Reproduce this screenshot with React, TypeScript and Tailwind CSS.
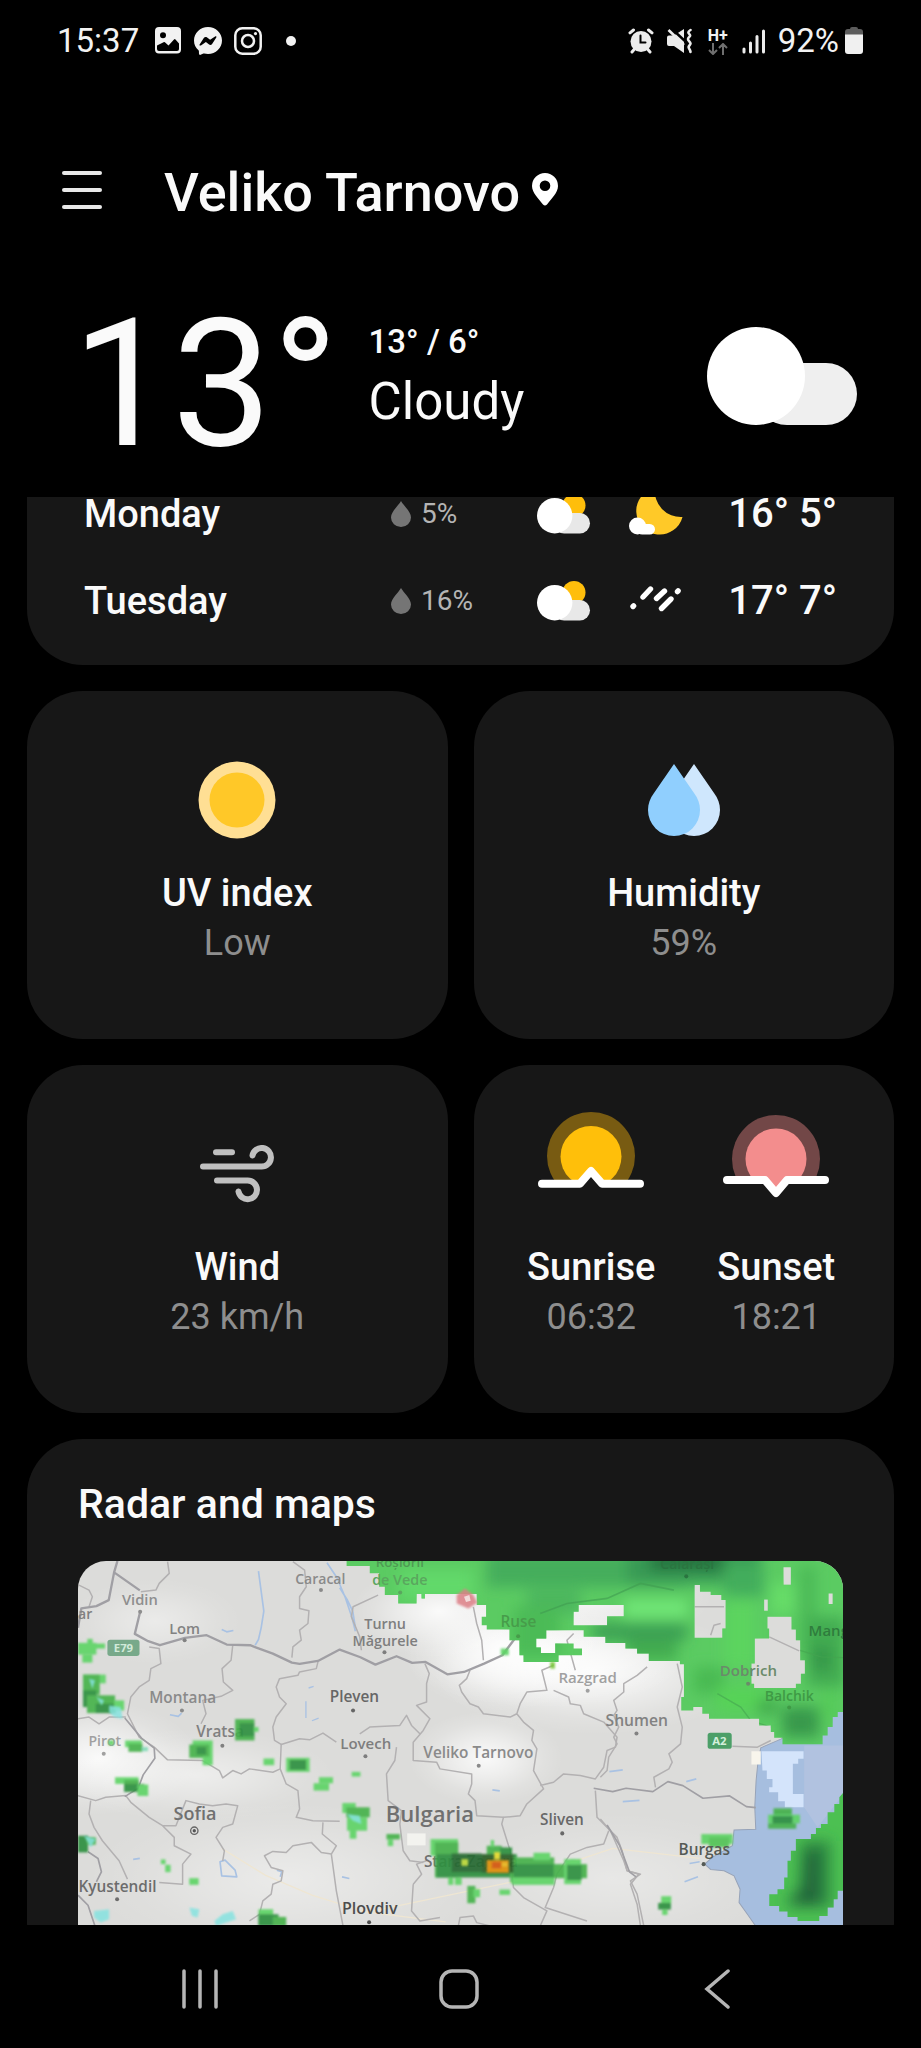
import React from "react";

type IconProps = { className?: string };

/* ---------- status bar icons ---------- */

const ImageIcon = () => (
  <svg className="h-7 w-7" viewBox="0 0 28 28" fill="#f2f2f2">
    <path
      fillRule="evenodd"
      d="M5 0H23a4 4 0 0 1 4 4V22.500a4 4 0 0 1-4 4H5a4 4 0 0 1-4-4V4a4 4 0 0 1 4-4ZM9 5.200a3 3 0 1 0 0 6 3 3 0 0 0 0-6ZM3 18.500V22a2 2 0 0 0 2 2H23a2 2 0 0 0 2-2V16.500L21.500 12.500a1 1 0 0 0-1.500 0L14.500 18.500l-3.600-3.200a1 1 0 0 0-1.400 0Z"
    />
  </svg>
);

const MessengerIcon = () => (
  <svg className="h-7 w-7" viewBox="0 0 28 28">
    <path
      fill="#f2f2f2"
      d="M14 0C6.200 0 0 5.900 0 13.500c0 4 1.700 7.400 4.500 9.800.3.200.4.600.4 1l.1 2.500c0 .8.800 1.300 1.600 1l2.800-1.200c.3-.1.500-.1.800 0 1.200.3 2.500.5 3.800.5 7.800 0 14-5.900 14-13.500S21.800 0 14 0Z"
    />
    <path fill="#000" d="m5.600 17.400 4.200-6.500c.7-1 2-1.300 3-.6l3.300 2.500 5-3.300c.9-.7 1.700.2 1.200 1l-4.200 6.400c-.6 1-2 1.300-3 .6l-3.200-2.500-5 3.400c-.9.600-1.900-.1-1.300-1Z" />
  </svg>
);

const InstagramIcon = () => (
  <svg className="h-7 w-7" viewBox="0 0 28 28" fill="none" stroke="#f2f2f2" strokeWidth="2.500">
    <rect x="1.300" y="1.300" width="25.400" height="25.400" rx="7" />
    <circle cx="14" cy="14" r="6" />
    <circle cx="21.500" cy="6.600" r="1.600" fill="#f2f2f2" stroke="none" />
  </svg>
);

const AlarmIcon = () => (
  <svg className="h-[26px] w-[26px]" viewBox="0 0 26 26" fill="none" stroke="#ececec" strokeLinecap="round">
    <circle cx="13" cy="13.500" r="10.500" fill="#ececec" stroke="none" />
    <path strokeWidth="3" d="M2 4.800 5.500 2M24 4.800 20.500 2M4 24l2.500-3M22 24l-2.500-3" />
    <path stroke="#000" strokeWidth="2" d="M12.500 7.500v7h5" />
  </svg>
);

const MuteIcon = () => (
  <svg className="h-[26px] w-[26px]" viewBox="0 0 26 26">
    <path fill="#ececec" d="M1 9.500a2 2 0 0 1 2-2H8L18 1V25L8 18H3a2 2 0 0 1-2-2Z" />
    <path stroke="#000" strokeWidth="2.500" d="M5 0 20 14" />
    <path stroke="#ececec" strokeWidth="2.600" d="M2.500 2 18 17" />
    <path
      fill="none"
      stroke="#ececec"
      strokeWidth="2.600"
      strokeLinecap="round"
      d="M24.500 2c-5 3 .5 4-.5 6s-3.500 2-1 5 1.500 3 0 5 1 2 1.500 6"
    />
  </svg>
);

const DataArrowsIcon = () => (
  <svg className="h-3 w-5" viewBox="0 0 20 12" fill="none" stroke="#6f6f6f" strokeWidth="2">
    <path d="M5 0v11M1 7l4 4 4-4M15 12V1M11 5l4-4 4 4" />
  </svg>
);

const SignalIcon = () => (
  <svg className="h-[26px] w-6" viewBox="0 0 24 26" stroke="#ececec" strokeWidth="3" strokeLinecap="round">
    <path d="M2 21v3M8.500 15v9M15 8.500V24M21.500 3v21" />
  </svg>
);

const BatteryIcon = () => (
  <svg className="h-7 w-[18px]" viewBox="0 0 18 28">
    <path fill="#5c5c5c" d="M5 2a2 2 0 0 1 2-2h4a2 2 0 0 1 2 2h2a3 3 0 0 1 3 3V12H0V5a3 3 0 0 1 3-3Z" />
    <path fill="#f0f0f0" d="M0 7.500H18V24a3 3 0 0 1-3 3H3a3 3 0 0 1-3-3Z" />
  </svg>
);

/* ---------- weather icons ---------- */

const PinIcon = () => (
  <svg className="h-[34px] w-[26px]" viewBox="0 0 26 34">
    <path
      fill="#fff"
      fillRule="evenodd"
      d="M13 0a13 13 0 0 0-13 13c0 7 7 13 11 18.500q2 2 4 0C19 26 26 20 26 13A13 13 0 0 0 13 0Zm0 7.500a5.300 5.300 0 1 1 0 10.600 5.300 5.300 0 0 1 0-10.600Z"
    />
  </svg>
);

const CloudIcon = () => (
  <svg className="h-[98px] w-[150px]" viewBox="0 0 150 98">
    <rect x="49" y="36" width="101" height="62" rx="31" fill="#efefef" />
    <circle cx="49" cy="49" r="49" fill="#fff" />
  </svg>
);

const PartlyCloudyIcon = () => (
  <svg className="h-14 w-[54px]" viewBox="0 0 54 56">
    <circle cx="37" cy="19.500" r="11.500" fill="#ffbe0b" />
    <rect x="17" y="27" width="36" height="20.500" rx="10.200" fill="#e8e8e8" />
    <circle cx="17.700" cy="29.700" r="17.700" fill="#fff" />
  </svg>
);

const MoonCloudIcon = () => (
  <svg className="h-14 w-14" viewBox="0 0 56 56">
    <path fill="#ffc928" d="M27 2A23.500 23.500 0 1 0 54.500 31A26 26 0 0 1 27 2Z" />
    <rect x="9" y="38" width="18" height="10.500" rx="5.200" fill="#fff" />
    <circle cx="9.500" cy="40" r="8.500" fill="#fff" />
  </svg>
);

const RainIcon = () => (
  <svg className="h-14 w-14" viewBox="0 0 56 56" stroke="#fff" strokeWidth="5.400" strokeLinecap="round">
    <path d="m5 33.500.6-.6M15 24l7.500-8M28.500 25.500l8-7.500M33.500 35.500l9.500-9.500M49.500 18.600l.6-.7" />
  </svg>
);

const RainDrop = () => (
  <svg className="h-[26px] w-5" viewBox="0 0 20 26">
    <path fill="#757575" d="M10 0c2 4 10 10.500 10 16.500a10 9.500 0 0 1-20 0C0 10.500 8 4 10 0Z" />
  </svg>
);

const UvIcon = ({ className }: IconProps) => (
  <svg className={className} viewBox="0 0 78 78">
    <circle cx="39" cy="39" r="38.500" fill="#ffdf94" />
    <circle cx="39" cy="39" r="27.500" fill="#ffc828" />
  </svg>
);

const HumidityIcon = ({ className }: IconProps) => (
  <svg className={className} viewBox="0 0 72 72">
    <path fill="#cfe7fd" d="M46 0 66 29C70 34 72 40 72 46A26 26 0 0 1 20 46C20 40 22 34 26 29Z" />
    <path fill="#90cffe" d="M26 0 46 29C50 34 52 40 52 46A26 26 0 0 1 0 46C0 40 2 34 6 29Z" />
  </svg>
);

const WindIcon = ({ className }: IconProps) => (
  <svg className={className} viewBox="0 0 74 58" fill="none" stroke="#c0c0c0" strokeWidth="6" strokeLinecap="round">
    <path d="M16 7.300H32" />
    <path d="M3 21.600H61.500A9.300 9.300 0 1 0 52.500 10.500" />
    <path d="M17 35.600H47.500A9.300 9.300 0 1 1 38.500 46.500" />
  </svg>
);

const SunriseIcon = ({ className }: IconProps) => (
  <svg className={className} viewBox="0 0 108 124">
    <clipPath id="sunrise-sky">
      <path d="M0 0H108V71H66L54 59 42 71H0Z" />
    </clipPath>
    <g clipPath="url(#sunrise-sky)">
      <circle cx="54" cy="44" r="44" fill="#785b12" />
      <circle cx="54" cy="44.500" r="30.500" fill="#ffbf0a" />
    </g>
    <path d="M5 71.700H43L54 59 65 71.700H103" fill="none" stroke="#fff" strokeWidth="8" strokeLinecap="round" strokeLinejoin="round" />
  </svg>
);

const SunsetIcon = ({ className }: IconProps) => (
  <svg className={className} viewBox="0 0 108 124">
    <clipPath id="sunset-sky">
      <path d="M0 0H108V68H66L54 81 42 68H0Z" />
    </clipPath>
    <g clipPath="url(#sunset-sky)">
      <circle cx="54" cy="47" r="44" fill="#724747" />
      <circle cx="54" cy="47" r="30.500" fill="#f38d8d" />
    </g>
    <path d="M5 68H43L54 81 65 68H103" fill="none" stroke="#fff" strokeWidth="8" strokeLinecap="round" strokeLinejoin="round" />
  </svg>
);

/* ---------- radar map ---------- */

type Echo = [number, number, number, number, string];

const LIGHT = "#5fd466";
const MID = "#46b24c";
const DEEP = "#2f9040";

const westEchoes: Echo[] = [
  [57, 308, 55, 35, LIGHT], [85, 296, 16, 14, LIGHT], [70, 343, 30, 24, LIGHT], [110, 310, 28, 15, LIGHT],
  [72, 403, 68, 26, LIGHT], [72, 403, 50, 60, MID], [72, 450, 40, 50, DEEP], [84, 465, 84, 53, MID], [110, 490, 60, 28, DEEP], [165, 480, 30, 30, LIGHT],
  [148, 600, 16, 14, LIGHT], [198, 600, 50, 20, LIGHT], [208, 610, 42, 24, MID], [248, 620, 18, 12, "#7fd9b5"],
  [168, 710, 70, 20, LIGHT], [195, 718, 44, 34, MID], [195, 730, 60, 24, DEEP], [235, 732, 32, 34, LIGHT],
  [400, 600, 60, 50, LIGHT], [390, 612, 60, 40, MID], [412, 620, 28, 22, DEEP], [430, 648, 30, 26, LIGHT],
  [527, 536, 58, 64, MID], [540, 548, 44, 40, DEEP], [583, 560, 14, 14, LIGHT],
  [612, 654, 32, 20, LIGHT], [680, 652, 70, 42, LIGHT], [690, 658, 50, 30, DEEP], [778, 710, 42, 18, LIGHT], [762, 728, 46, 22, LIGHT],
  [876, 694, 26, 14, LIGHT],
  [848, 787, 40, 30, LIGHT], [860, 800, 70, 30, MID], [862, 830, 60, 40, LIGHT], [870, 860, 20, 34, LIGHT],
  [57, 885, 30, 50, DEEP], [84, 890, 26, 22, MID],
  [305, 956, 14, 14, LIGHT], [318, 972, 16, 22, LIGHT], [390, 1012, 28, 20, LIGHT],
  [597, 1105, 44, 50, LIGHT], [597, 1120, 60, 35, DEEP], [640, 1128, 40, 27, MID],
];

const centralEchoes: Echo[] = [
  [482, 325, 24, 20, LIGHT], [630, 365, 14, 20, "#7cc83e"],
  [140, 880, 40, 16, MID], [144, 896, 16, 20, LIGHT],
  [272, 895, 82, 50, LIGHT], [285, 905, 70, 105, MID], [290, 940, 240, 70, DEEP],
  [440, 915, 45, 30, MID], [452, 898, 10, 20, LIGHT], [480, 920, 36, 20, DEEP], [345, 1010, 20, 22, LIGHT], [325, 1010, 15, 22, LIGHT],
  [510, 950, 132, 75, MID], [520, 970, 124, 40, DEEP], [580, 936, 50, 22, LIGHT], [515, 1010, 128, 22, LIGHT],
  [640, 970, 100, 42, MID], [672, 955, 50, 75, LIGHT], [680, 972, 44, 46, DEEP], [690, 955, 18, 16, LIGHT],
  [382, 1035, 24, 52, MID], [400, 1045, 20, 24, LIGHT], [478, 1046, 32, 16, LIGHT],
  [335, 938, 90, 56, "#256a30"], [425, 940, 95, 56, "#2a5f28"],
];

const stormCells: Echo[] = [
  [364, 955, 20, 20, "#c9e045"],
  [440, 958, 66, 38, "#ee9a18"], [455, 963, 28, 20, "#e2601f"], [462, 934, 18, 22, "#f0e23a"], [486, 965, 16, 12, "#f7c531"],
];

const eastEchoes: Echo[] = [
  [302, 880, 94, 30, LIGHT], [325, 890, 60, 30, "#52c456"],
  [182, 1066, 30, 22, LIGHT], [173, 1086, 38, 20, DEEP], [185, 1106, 16, 16, LIGHT],
  [518, 803, 55, 20, MID], [502, 822, 95, 26, LIGHT], [515, 826, 60, 26, DEEP], [502, 848, 84, 16, MID],
];

const Echoes = ({ items }: { items: Echo[] }) => (
  <g opacity=".92" filter="url(#echo-edge)">
    {items.map(([x, y, w, h, fill], i) => (
      <rect key={i} x={x} y={y} width={w} height={h} fill={fill} />
    ))}
  </g>
);

type Place = { name: string; x: number; y: number; size: number; color: string; dot?: [number, number] };

const places: Place[] = [
  { name: "Vidin", x: 185, y: 131, size: 44, color: "#8e8e8e", dot: [186, 152] },
  { name: "Caracal", x: 725, y: 69, size: 42, color: "#8a8a8a", dot: [727, 87] },
  { name: "Lom", x: 319, y: 219, size: 44, color: "#828282", dot: [319, 237] },
  { name: "Montana", x: 313, y: 424, size: 46, color: "#8a8a8a", dot: [311, 447] },
  { name: "Vratsa", x: 425, y: 527, size: 46, color: "#808080", dot: [432, 553] },
  { name: "Pirot", x: 80, y: 555, size: 42, color: "#a0a0a0", dot: [77, 577] },
  { name: "Sofia", x: 350, y: 775, size: 54, color: "#707070" },
  { name: "Kyustendil", x: 118, y: 990, size: 46, color: "#6c6c6c", dot: [117, 1012] },
  { name: "Turnu", x: 919, y: 203, size: 43, color: "#7e7e7e" },
  { name: "Măgurele", x: 919, y: 253, size: 43, color: "#7e7e7e", dot: [917, 273] },
  { name: "Pleven", x: 827, y: 423, size: 46, color: "#666666", dot: [823, 447] },
  { name: "Lovech", x: 861, y: 562, size: 45, color: "#7e7e7e", dot: [860, 584] },
  { name: "Veliko Tarnovo", x: 1198, y: 589, size: 46, color: "#8a8a8a", dot: [1199, 613] },
  { name: "Bulgaria", x: 1053, y: 780, size: 66, color: "#707070" },
  { name: "Sliven", x: 1448, y: 790, size: 46, color: "#686868", dot: [1449, 815] },
  { name: "Plovdiv", x: 873, y: 1056, size: 48, color: "#4c4c4c", dot: [871, 1081] },
  { name: "Razgrad", x: 1525, y: 366, size: 45, color: "#a0a0a0", dot: [1525, 388] },
  { name: "Shumen", x: 1672, y: 495, size: 47, color: "#828282", dot: [1671, 516] },
];

const coveredPlaces: Place[] = [
  { name: "Roșiorii", x: 963, y: 18, size: 40, color: "#4f9a53" },
  { name: "de Vede", x: 963, y: 72, size: 43, color: "#5aa65e", dot: [964, 94] },
  { name: "Călărași", x: 1823, y: 24, size: 42, color: "#2a7540", dot: [1820, 46] },
  { name: "Ruse", x: 1318, y: 197, size: 46, color: "#479c4a", dot: [1317, 225] },
  { name: "Dobrich", x: 2006, y: 344, size: 45, color: "#6b8a6a", dot: [2005, 367] },
  { name: "Balchik", x: 2128, y: 419, size: 42, color: "#3f9a45", dot: [2128, 438] },
  { name: "Burgas", x: 1874, y: 881, size: 46, color: "#555a55", dot: [1872, 907] },
];

const Labels = ({ items }: { items: Place[] }) => (
  <g fontFamily='"Open Sans", "Noto Sans", sans-serif' fontWeight="600" textAnchor="middle">
    {items.map((p) => (
      <g key={p.name} fill={p.color}>
        <text x={p.x} y={p.y} fontSize={p.size}>
          {p.name}
        </text>
        {p.dot && <circle cx={p.dot[0]} cy={p.dot[1]} r="6" />}
      </g>
    ))}
  </g>
);

const RadarMap = () => (
  <svg
    className="block w-full rounded-t-[28px]"
    viewBox="0 0 2289 1092"
    preserveAspectRatio="xMidYMin slice"
    role="img"
    aria-label="Rain radar over Bulgaria"
  >
    <defs>
      <radialGradient id="haze">
        <stop offset="0" stopColor="#fff" stopOpacity=".85" />
        <stop offset=".4" stopColor="#fff" stopOpacity=".5" />
        <stop offset=".75" stopColor="#fff" stopOpacity=".15" />
        <stop offset="1" stopColor="#fff" stopOpacity="0" />
      </radialGradient>
      <filter id="soft" x="-30%" y="-30%" width="160%" height="160%">
        <feGaussianBlur stdDeviation="20" />
      </filter>
      <filter id="echo-edge">
        <feGaussianBlur stdDeviation="2.500" />
      </filter>
      <clipPath id="front">
        <path
          clipRule="evenodd"
          d="M20 63V78H90V100H118V140H135V165H175V190H230V162H245V175H255V162H410V195H438V230H425V255H440V268H508V300H538V345H550V365H655V345H725V325H700V310H645V338H602V322H588V295H618V270H730V290H795V308H855V325H890V340H925V362H1018V372H1030V470H1022V510H1058V500H1085V520H1105V535H1255V555H1290V575H1300V592H1325V612H1445V585H1460V560H1475V530H1490V515H1512V63ZM715 195H850V228H800V255H700V215H715ZM1062 135H1078V155H1110V165H1142V180H1155V265H1145V293H1062ZM1280 230H1352V268H1365V300H1378V360H1392V400H1380V430H1365V443H1240V430H1232V370H1242V295H1285V265H1280ZM1328 82H1350V134H1328ZM1270 178H1281V212H1270ZM1463 160H1475V192H1463Z"
        />
      </clipPath>
      <clipPath id="sea-cell">
        <path d="M728 755V1050H710V1075H698V1100H680V1125H655V1140H590V1128H560V1112H535V1095H505V1060H530V1045H550V1010H560V960H570V930H585V895H630V880H645V862H660V850H680V815H700V790H715V770Z" />
      </clipPath>
    </defs>

    <rect width="2289" height="1092" fill="#dcdcda" />

    {/* cloud haze */}
    <g fill="url(#haze)">
      <ellipse cx="1540" cy="330" rx="480" ry="190" />
      <ellipse cx="1400" cy="290" rx="420" ry="150" />
      <ellipse cx="1270" cy="260" rx="300" ry="190" />
      <ellipse cx="1080" cy="150" rx="260" ry="140" />
      <ellipse cx="1220" cy="590" rx="230" ry="140" />
      <ellipse cx="60" cy="590" rx="300" ry="170" />
      <ellipse cx="350" cy="640" rx="420" ry="140" opacity=".6" />
      <ellipse cx="230" cy="180" rx="260" ry="130" opacity=".5" />
      <ellipse cx="620" cy="950" rx="600" ry="230" opacity=".5" />
      <ellipse cx="1600" cy="950" rx="500" ry="200" opacity=".4" />
      <ellipse cx="1500" cy="100" rx="400" ry="160" />
    </g>
    <rect x="985" y="815" width="55" height="36" fill="#f3f3ef" />

    {/* Black Sea */}
    <g transform="translate(1563 -63)">
      <path
        fill="#a6bedf"
        stroke="#97a3b8"
        strokeWidth="3"
        d="M732 480V1160H468L440 1120 415 1085 418 1045 400 1005 370 990 330 986 312 970 335 950 395 915 400 868 465 866 462 800 466 720 472 660 480 622 540 596Z"
      />
      <path fill="#b6c3df" opacity=".7" d="M610 615H728V760L650 860 610 800Z" />
      <path
        fill="#d4e4fb"
        d="M482 632H608V655H592V670H576V760H608V800H552V782H532V755H505V740H515V715H498V690H485Z"
      />
      <path fill="#f8f5ec" d="M452 632H480V672H452Z" />
    </g>

    {/* rivers and lakes */}
    <g fill="none" stroke="#a9c2e3" strokeWidth="5" strokeLinejoin="round">
      <path d="M540 30 548 90 556 150 548 200 540 235 530 252" />
      <path d="M745 5 775 50 800 110 820 170 830 210M783 80 805 115 822 150 830 200" />
      <path d="M430 205 445 212 465 208M275 460 300 465 310 455M165 893 185 890M790 945 812 950M1590 630 1630 625M1630 720 1680 716M1240 685 1262 688M1820 660 1850 652M1830 905 1860 900M1815 960 1855 945" />
      <path d="M425 900 440 895 470 925 475 945 430 942ZM595 925 610 930 605 945" />
      <path d="M690 380 705 375M682 420V470M700 478 720 470" strokeWidth="4" />
    </g>

    {/* motorways */}
    <g fill="none" stroke="#efe6d2" strokeWidth="4">
      <path d="M430 860 560 940 700 1000 860 1050 1100 1080M870 1050 1300 960 1600 860 1860 890" />
    </g>

    {/* province borders */}
    <g fill="none" stroke="#b3b1b2" strokeWidth="4.500" strokeLinejoin="round">
      <g transform="translate(-57 -63)">
        <path d="M325 65 330 100 300 130 290 150 245 155M60 135 90 150 100 170 90 200M700 65 735 90 740 140 720 170 720 205 748 212 745 250 720 270 725 300 700 320 697 352" />
        <path d="M270 320 300 325 305 370 275 385 270 420 240 440 215 470 205 520 240 590 285 620 325 658 430 660 480 690 490 712 520 690 545 700 570 685 640 695 662 685 665 610" />
        <path d="M520 315 515 360 488 385 492 425 520 450 485 468 430 480 440 520 425 550M775 365 770 385 720 395 715 405 660 415 650 440 660 470 680 490 650 530 640 560 645 600 665 612 720 595 750 598 790 578 830 605" />
        <path d="M662 685 680 730 715 750 720 805 710 830 760 840 840 842M790 845 788 880 830 915 815 940 785 935 755 905 700 915 680 935 640 932 615 945 635 980 670 990 665 1020 640 1030 635 1060 610 1080 600 1120 570 1140" />
        <path d="M57 535 90 530 120 550 150 530 200 530M57 765 110 780 140 770 200 765 215 785 270 830 310 855 350 855 380 780 420 790 460 795 500 790 535 795 520 850 490 860 470 890 495 930 490 960M95 780 90 820 105 860 130 900 180 960 205 1015M310 855 345 890 345 915 395 940 370 970 370 1030 300 1025M815 940 830 1050 850 1155" />
      </g>
      <g transform="translate(783 -63)">
        <path d="M115 165 40 200 35 230 60 290 65 330M400 200 410 250 425 300 430 360M255 370 268 400 260 430 260 485 230 495 270 535 250 570 220 605 220 660 290 665 300 685 395 700 395 730 385 760 405 780 410 825 490 830M60 580 90 560 180 555 200 525 215 555 240 580M170 620 165 660 140 700 145 780 185 810 180 850 190 930 210 960 250 965" />
        <path d="M390 390 380 415 358 435 365 455 390 490 415 500 430 520 510 530 530 520 540 490 560 455 620 450 605 390 640 375M530 520 550 545 580 570 575 600 590 625 580 690 610 745 560 790 540 825 490 830 485 850 510 930 520 1040 550 1070 620 1110 600 1155M640 450 685 470 690 490 720 495 730 520 790 545 830 590 825 620 800 630 790 680 765 715 720 705 670 700 640 725 600 735M700 280 680 300 705 390M765 750 770 830 830 890 845 930 860 990 895 1000 870 1030 890 1090 900 1155M805 870 790 910 740 920 690 940 650 1000 640 1040 615 1100 740 1140M220 1030 245 1000 230 970 260 960M220 1030 215 1110 240 1140 300 1130M355 1155 360 1130 400 1125 410 1145 450 1155" />
      </g>
      <g transform="translate(1563 -63)">
        <path d="M140 380 110 405 70 430 70 455 40 480 50 510 40 525 55 560 40 590 50 610 25 650 20 690 0 710M230 370 245 440 230 500 245 560 240 610 205 640 215 665 205 685 160 710 165 740M0 835 30 870 70 960 80 990 120 1000 90 1020 110 1060 130 1155M395 617 470 620 510 600M282 200H370M330 285 340 255 360 250M505 290 595 332" />
      </g>
    </g>

    {/* national borders and the Danube */}
    <g fill="none" stroke="#a09fa4" strokeWidth="7" strokeLinejoin="round">
      <path d="M118 0 108 34 185 88M108 34 92 117 55 135 10 142 0 200M186 152 170 218 210 240 245 252 320 230 385 222 445 250 515 252 583 277 640 304 663 308 718 299 783 265 845 288 890 310 953 285 1000 305 1040 302 1105 339 1155 332 1215 307 1270 282 1310 228" />
      <path strokeWidth="5" d="M140 470 190 530 228 560 230 590 195 640 180 680 140 705M30 870 60 890 70 930 55 960M0 1000 30 1030 50 1090" />
      <path
        strokeWidth="5"
        d="M1543 680 1600 690 1640 680 1720 690 1765 660 1810 672 1870 710 1950 703 2000 735 2028 738M1583 790 1620 850 1650 930 1670 945"
      />
    </g>

    <Labels items={places} />
    <circle cx="348" cy="807" r="11" fill="none" stroke="#666" strokeWidth="4" />
    <circle cx="348" cy="807" r="5" fill="#555" />
    <g fontFamily='"Open Sans", "Noto Sans", sans-serif' fontWeight="600">
      <text x="0" y="173" fontSize="42" fill="#808080">ar</text>
      <text x="1035" y="915" fontSize="46" fill="#707070">Stara Zagora</text>
      <rect x="88" y="236" width="96" height="48" rx="8" fill="#78a98a" />
      <text x="136" y="272" fontSize="34" fontWeight="700" textAnchor="middle" fill="#d2ead9">E79</text>
      <rect x="1884" y="514" width="72" height="48" rx="8" fill="#4c9f68" />
      <text x="1919" y="550" fontSize="34" fontWeight="700" textAnchor="middle" fill="#d3efdc">A2</text>
    </g>

    {/* rain front across the north-east */}
    <g transform="translate(783 -63)">
      <g clipPath="url(#front)">
        <rect x="0" y="63" width="1520" height="560" fill="#5bcb62" />
        <g filter="url(#soft)">
          <rect x="440" y="40" width="600" height="100" fill="#45ad5c" />
          <rect x="860" y="30" width="400" height="100" fill="#389a54" />
          <rect x="930" y="40" width="220" height="50" fill="#22703c" />
          <rect x="560" y="150" width="160" height="70" fill="#4cb65d" />
          <rect x="180" y="90" width="220" height="90" fill="#62d96a" />
          <rect x="850" y="180" width="190" height="50" fill="#72e878" />
          <rect x="520" y="200" width="140" height="150" fill="#4bbb56" />
          <rect x="760" y="250" width="280" height="50" fill="#3b9f52" />
          <rect x="860" y="300" width="150" height="60" fill="#43ac50" />
          <rect x="1150" y="180" width="90" height="200" fill="#5bd45f" />
          <rect x="1150" y="70" width="120" height="100" fill="#43ad5c" />
          <rect x="1290" y="130" width="70" height="90" fill="#66dd68" />
          <rect x="1060" y="380" width="90" height="80" fill="#49ba53" />
          <rect x="1130" y="440" width="140" height="70" fill="#56d357" />
          <rect x="1375" y="80" width="50" height="260" fill="#4cba57" />
          <rect x="1400" y="230" width="110" height="210" fill="#43ac51" />
          <rect x="1410" y="320" width="60" height="70" fill="#35984a" />
          <rect x="1250" y="480" width="60" height="40" fill="#3fa74b" />
          <rect x="1325" y="500" width="110" height="90" fill="#37994c" />
          <rect x="1440" y="450" width="50" height="90" fill="#54cb58" />
        </g>
        <path d="M600 220 680 190 800 175 900 130 1000 150" stroke="#3f9b50" strokeWidth="5" fill="none" opacity=".6" />
        <path d="M1130 460 1200 500 1230 540 1290 560M1375 330 1440 350 1510 352" stroke="#45a350" strokeWidth="4" fill="none" opacity=".6" />
      </g>
      <path d="M350 165 375 145 400 165 412 188 385 205 350 190Z" fill="#dd7f86" opacity=".85" filter="url(#echo-edge)" />
      <path d="M372 170 388 165 392 182 378 186Z" fill="#f3dada" />
    </g>

    <g transform="translate(-57 -63)">
      <Echoes items={westEchoes} />
      <g fill="#86e3e0" opacity=".85" filter="url(#echo-edge)">
        <path d="M150 495 185 500 190 535 165 530 150 515ZM90 415 108 420 100 445ZM112 470 135 480 128 495ZM105 1110 150 1105 150 1135 125 1145 105 1130ZM390 1100 420 1105 415 1130 398 1125ZM490 1120 520 1110 530 1135 470 1155 465 1140ZM75 885 110 895 95 920ZM860 820 900 825 905 850 880 840Z" />
      </g>
    </g>
    <g transform="translate(783 -63)">
      <Echoes items={centralEchoes} />
      <Echoes items={stormCells} />
    </g>
    <g transform="translate(1563 -63)">
      <Echoes items={eastEchoes} />
      <g clipPath="url(#sea-cell)">
        <rect x="500" y="750" width="230" height="400" fill="#4cc052" />
        <g filter="url(#soft)">
          <path fill="#2f8c42" d="M600 900H690V1100H560V1060H590Z" />
          <path fill="#22643a" d="M615 930H655V1090H585V1050H610Z" />
        </g>
      </g>
    </g>
    <Labels items={coveredPlaces} />
    <text x="2186" y="223" fontSize="45" fontWeight="600" fill="#2f7c3d" fontFamily='"Open Sans", "Noto Sans", sans-serif'>
      Mangalia
    </text>
  </svg>
);

/* ---------- page ---------- */

const forecast = [
  { day: "Monday", rain: "5%", high: "16°", low: "5°", Night: MoonCloudIcon, night: "Partly cloudy night" },
  { day: "Tuesday", rain: "16%", high: "17°", low: "7°", Night: RainIcon, night: "Rain at night" },
];

type StatProps = { icon: React.ReactNode; label: string; value: string };

const Stat = ({ icon, label, value }: StatProps) => (
  <div className="flex flex-col items-center">
    <div className="mb-[18px] flex h-[100px] items-center justify-center">{icon}</div>
    <h2 className="text-[38px] leading-[50px] font-medium">{label}</h2>
    <p className="text-[36px] leading-[50px] text-[#8e8e8e]">{value}</p>
  </div>
);

const Card = ({ children }: { children: React.ReactNode }) => (
  <section className="flex justify-center rounded-[56px] bg-[#171717] pt-[59px] pb-[71px]">{children}</section>
);

export default function App() {
  return (
    <div className="flex h-screen flex-col bg-black font-['Roboto',sans-serif] text-[#fafafa]">
      <header>
        <div className="flex h-[82px] items-center justify-between pr-[58px] pl-[57px] text-[33px] text-[#f2f2f2]">
          <div className="flex items-center gap-3">
            <span className="mr-[3px]">15:37</span>
            <ImageIcon />
            <MessengerIcon />
            <InstagramIcon />
            <span className="ml-3 h-[10px] w-[10px] rounded-full bg-[#f2f2f2]" />
          </div>
          <div className="flex items-center gap-3">
            <AlarmIcon />
            <MuteIcon />
            <span className="mr-[2px] ml-1 flex flex-col items-center">
              <span className="text-[16px] leading-[15px] font-bold">H+</span>
              <DataArrowsIcon />
            </span>
            <SignalIcon />
            <span className="flex items-center gap-[6px]">
              92%
              <BatteryIcon />
            </span>
          </div>
        </div>

        <div className="flex h-[216px] items-center pl-[62px]">
          <button type="button" aria-label="Open menu" className="mr-[62px] flex w-10 flex-col gap-[13px]">
            <span className="h-1 w-full rounded-full bg-[#e8e8e8]" />
            <span className="h-1 w-full rounded-full bg-[#e8e8e8]" />
            <span className="h-1 w-full rounded-full bg-[#e8e8e8]" />
          </button>
          <h1 className="mr-3 pt-[5px] text-[54px] leading-[64px] font-medium">Veliko Tarnovo</h1>
          <PinIcon />
        </div>

        <div className="flex h-[199px] items-center justify-between pr-[64px] pb-[44px] pl-[72px]">
          <div className="flex items-center gap-[30px]">
            <p className="pt-[16px] text-[178px] leading-[164px]">13°</p>
            <div className="flex flex-col gap-[3px] pt-[5px]">
              <p className="text-[33px] leading-[44px] font-medium">13° / 6°</p>
              <p className="text-[51px] leading-[70px]">Cloudy</p>
            </div>
          </div>
          <CloudIcon />
        </div>
      </header>

      <main className="min-h-0 flex-1 overflow-y-auto px-[27px] [scrollbar-width:none]">
        <div className="-mt-[27px] flex flex-col gap-[26px]">
          <section className="rounded-b-[56px] bg-[#171717] px-[57px] pb-[21px]">
            <table className="w-full" aria-label="Daily forecast">
              <tbody>
                {forecast.map(({ day, rain, high, low, Night, night }) => (
                  <tr key={day} className="h-[87px]">
                    <th scope="row" className="p-0 text-left text-[38px] leading-[34px] font-medium">
                      {day}
                    </th>
                    <td className="w-[146px] p-0">
                      <span className="flex items-center gap-[10px] text-[28px] leading-[34px] text-[#b4b4b4]">
                        <RainDrop />
                        {rain}
                      </span>
                    </td>
                    <td className="w-[91px] p-0" aria-label="Partly cloudy">
                      <PartlyCloudyIcon />
                    </td>
                    <td className="w-[56px] p-0" aria-label={night}>
                      <Night />
                    </td>
                    <td className="w-[153px] p-0 text-right text-[40px] leading-[34px] font-medium">
                      {high} {low}
                    </td>
                  </tr>
                ))}
              </tbody>
            </table>
          </section>

          <div className="grid grid-cols-2 gap-[26px]">
            <Card>
              <Stat icon={<UvIcon className="h-[78px] w-[78px]" />} label="UV index" value="Low" />
            </Card>
            <Card>
              <Stat icon={<HumidityIcon className="h-[72px] w-[72px]" />} label="Humidity" value="59%" />
            </Card>
            <Card>
              <Stat icon={<WindIcon className="h-[58px] w-[74px]" />} label="Wind" value="23 km/h" />
            </Card>
            <Card>
              <div className="grid w-[370px] grid-cols-2">
                <Stat icon={<SunriseIcon className="h-[124px] w-[108px] shrink-0" />} label="Sunrise" value="06:32" />
                <Stat icon={<SunsetIcon className="h-[124px] w-[108px] shrink-0" />} label="Sunset" value="18:21" />
              </div>
            </Card>
          </div>

          <section className="rounded-[56px] bg-[#171717] px-[51px] pt-[40px] pb-[52px]">
            <h2 className="mb-[32px] text-[41px] leading-[50px] font-medium">Radar and maps</h2>
            <RadarMap />
          </section>
        </div>
      </main>

      <nav aria-label="System navigation" className="grid h-[123px] shrink-0 grid-cols-3 pt-[5px] pr-[74px] pl-[70px]">
        <button type="button" aria-label="Recent apps" className="flex items-center justify-center">
          <svg className="h-10 w-10" viewBox="0 0 40 40" stroke="#b5b5b5" strokeWidth="3.500" strokeLinecap="round">
            <path d="M4 2V38M20 2V38M36 2V38" />
          </svg>
        </button>
        <button type="button" aria-label="Home" className="flex items-center justify-center">
          <svg className="h-10 w-10" viewBox="0 0 40 40" fill="none" stroke="#b5b5b5" strokeWidth="3.500">
            <rect x="2" y="2" width="36" height="36" rx="11" />
          </svg>
        </button>
        <button type="button" aria-label="Back" className="flex items-center justify-center">
          <svg className="h-10 w-10" viewBox="0 0 40 40" fill="none" stroke="#b5b5b5" strokeWidth="3.500" strokeLinecap="round">
            <path d="M30 2 9 20 30 38" />
          </svg>
        </button>
      </nav>
    </div>
  );
}
